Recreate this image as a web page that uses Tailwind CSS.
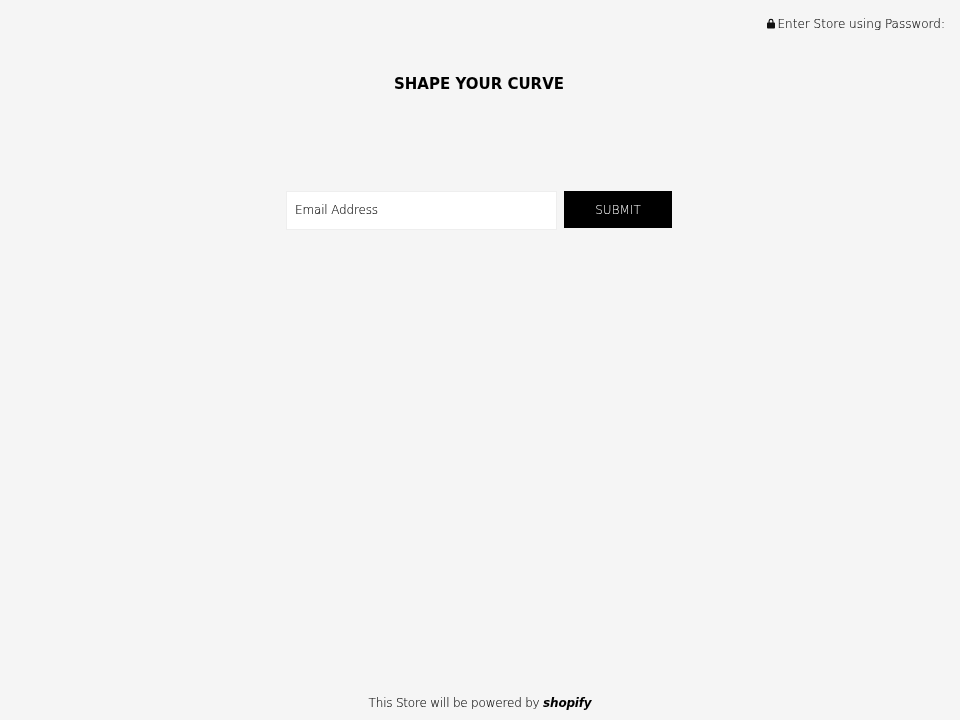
<!DOCTYPE html>
<html lang="en">
<head>
  <meta charset="UTF-8">
  <meta name="viewport" content="width=device-width, initial-scale=1.0">
  <title>Shape Your Curve</title>
  <script src="https://cdn.jsdelivr.net/npm/@tailwindcss/browser@4"></script>
</head>
<body class="bg-[#f5f5f5] h-[720px] overflow-hidden flex flex-col font-['DejaVu_Sans',sans-serif] font-extralight text-black">
  <div class="flex justify-end items-center gap-[3px] pt-[15px] pr-[15px] text-[12px] leading-[18px] will-change-transform [-webkit-text-stroke:0.1px_black]">
    <svg class="w-[8px] h-[11px] -mt-[2px]" viewBox="0 0 9 11" fill="#111"><path d="M1.7 4.5V3a2.8 2.8 0 0 1 5.600 0v1.500h.7a1 1 0 0 1 1 1V10a1 1 0 0 1-1 1H1a1 1 0 0 1-1-1V5.500a1 1 0 0 1 1-1zM3 4.500h3V3a1.500 1.500 0 0 0-3 0z"/></svg>
    <span>Enter Store using Password:</span>
  </div>
  <h1 class="mt-[41px] text-center text-[15px] leading-[20px] font-bold text-black pr-[2px] will-change-transform">SHAPE YOUR CURVE</h1>
  <form class="mt-[97px] ml-[286px] flex items-start gap-[7px]">
    <div class="w-[271px] h-[39px] bg-white border border-[#eeeeee]">
      <input type="text" placeholder="Email Address" class="w-full h-full bg-transparent pl-[8px] pb-[1px] text-[12px] tracking-[-0.15px] placeholder:text-black outline-none will-change-transform [-webkit-text-stroke:0.1px_black]">
    </div>
    <button type="button" class="w-[108px] h-[37px] bg-black text-white text-[12px]"><span class="block will-change-transform">SUBMIT</span></button>
  </form>
  <div class="mt-auto pb-[8px] text-center text-[12px] leading-[18px] tracking-[-0.2px] will-change-transform [-webkit-text-stroke:0.1px_black]">This Store will be powered by <b class="font-bold italic text-black [-webkit-text-stroke:0]">shopify</b></div>
</body>
</html>
